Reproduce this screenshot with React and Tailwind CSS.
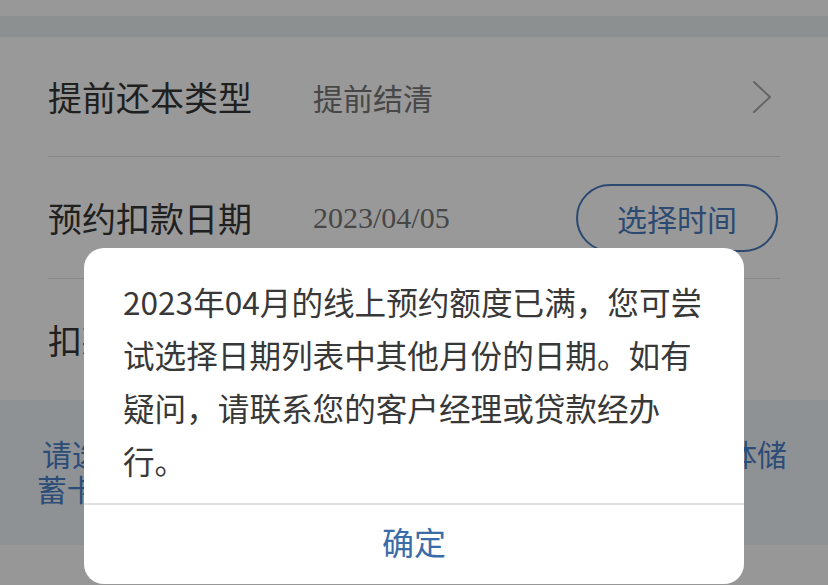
import React from "react";

const cjk = { fontFamily: '"Noto Sans CJK SC", "Noto Sans", sans-serif' };

export default function App() {
  return (
    <div className="relative w-[828px] h-[585px] overflow-hidden bg-white" style={cjk}>
      {/* underlying page */}
      <div className="flex flex-col">
        <div className="h-[16px] bg-[#fdfdfd]" />
        <div className="h-[21px] bg-[#ebf1f1]" />
        <div className="px-[48px] bg-white">
          <div className="h-[119px] flex items-center">
            <div className="w-[265px] text-[34px] text-[#363636] leading-none">提前还本类型</div>
            <div className="text-[30px] text-[#777777] leading-none">提前结清</div>
            <svg className="ml-auto mr-[8px]" width="20" height="32" viewBox="0 0 20 32" fill="none">
              <polyline points="2,1 18,16 2,31" stroke="#a8a8a8" strokeWidth="2" strokeLinecap="round" strokeLinejoin="round" />
            </svg>
          </div>
          <div className="h-px bg-[#e2e2e2]" />
          <div className="h-[121px] flex items-center">
            <div className="w-[265px] text-[34px] text-[#363636] leading-none">预约扣款日期</div>
            <div className="text-[30px] text-[#777777] leading-none" style={{ fontFamily: '"Liberation Serif", serif' }}>2023/04/05</div>
            <button className="ml-auto mr-[2px] w-[202px] h-[68px] rounded-full border-2 border-[#4a7bbf] text-[30px] text-[#4a7bbf] leading-none flex items-center justify-center">
              选择时间
            </button>
          </div>
          <div className="h-px bg-[#e2e2e2]" />
          <div className="h-[121px] flex items-center">
            <div className="w-[265px] text-[34px] text-[#363636] leading-none">扣款账户</div>
            <div className="text-[30px] text-[#777777] leading-none">个人借记卡</div>
          </div>
        </div>
        <div className="h-[145px] bg-[#eef4f9] pt-[36px] text-[29.8px] leading-[35px] text-[#4a80c6] whitespace-nowrap">
          <div className="pl-[42px]">请选择本人名下已绑定的银行卡作为还款的账户，个体储</div>
          <div className="pl-[37px]">蓄卡，并确保扣款日前账户余额充足。</div>
        </div>
        <div className="h-[40px] bg-[#fcfcfc]" />
      </div>

      {/* dim overlay */}
      <div className="absolute inset-0 bg-black/40" />

      {/* dialog */}
      <div className="absolute left-[84px] top-[248px] w-[660px] h-[336px] bg-white rounded-[20px] flex flex-col overflow-hidden">
        <div className="flex-1 pl-[39px] pr-[20px] pt-[27px] text-[31.6px] leading-[53px] text-[#383838] whitespace-nowrap">
          2023年04月的线上预约额度已满，您可尝<br />
          试选择日期列表中其他月份的日期。如有<br />
          疑问，请联系您的客户经理或贷款经办<br />
          行。
        </div>
        <div className="h-[2px] bg-[#e2e2e2]" />
        <div className="h-[79px] pb-[8px] flex items-center justify-center text-[32px] text-[#3b6caa] leading-none">确定</div>
      </div>
    </div>
  );
}
